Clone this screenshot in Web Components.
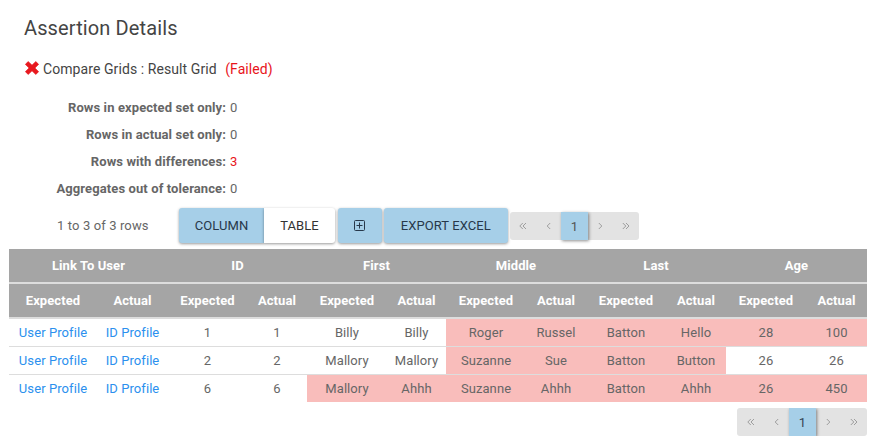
<!DOCTYPE html>
<html lang="en"><head><meta charset="utf-8"><title>Assertion Details</title>
<style>html,body{margin:0;background:#fff}body{height:442px;overflow:hidden;font-family:Roboto,"Liberation Sans",sans-serif;font-size:13px;color:#666;letter-spacing:.08px}</style>
</head><body><assertion-page></assertion-page>
<script>
class Base extends HTMLElement{
  constructor(){super();this.attachShadow({mode:'open'})}
  connectedCallback(){this.shadowRoot.innerHTML=this.view()}
}
customElements.define('assertion-status',class extends Base{view(){return `<style>
:host{display:flex;align-items:center;height:20px;font-size:14px;line-height:20px;color:#444;white-space:pre}
svg{width:14px;height:14px;margin:-3px 4px 0 1px}.f{color:#e8141c;margin-left:8.5px}</style>
<svg viewBox="0 0 14 14"><path d="M3.2 .6 L7 4.2 L10.8 .6 L13.6 3.3 L9.9 7 L13.6 10.7 L10.8 13.4 L7 9.8 L3.2 13.4 L.4 10.7 L4.1 7 L.4 3.3 Z" fill="#e8191f" stroke="#e8191f" stroke-width=".7" stroke-linejoin="round"/></svg><slot></slot><span class="f">(Failed)</span>`}});
customElements.define('stat-line',class extends Base{view(){return `<style>
:host{display:flex;height:27px;line-height:27px;font-size:13px}b{width:226px;text-align:right;font-weight:700;letter-spacing:.1px}span{margin-left:4px;color:#666}:host([bad]) span{color:#e8141c}</style>
<b>${this.getAttribute('label')}:</b><span><slot></slot></span>`}});
customElements.define('tool-button',class extends Base{view(){return `<style>
:host{display:flex;align-items:center;justify-content:center;box-sizing:border-box;height:35px;border-radius:3px;background:#a6cfe8;color:#27384a;font-size:13px;box-shadow:0 1px 3px rgba(0,0,0,.4)}
:host([plain]){background:#fff;color:#333;border-radius:0 3px 3px 0}:host([first]){border-radius:3px 0 0 3px}</style><slot></slot>`}});
customElements.define('page-nav',class extends Base{view(){
const a=d=>`<span><svg width="8" height="8" viewBox="0 0 8 8"><path d="${d}" fill="none" stroke="#999" stroke-width=".95"/></svg></span>`;
return `<style>:host{display:grid;grid-template-columns:var(--nav-first,26px) 25px 27px 25px 1fr;width:var(--nav-width,129px);height:28px;background:#e3e3e3;border-radius:3px;overflow:var(--nav-clip,visible)}
span{display:flex;align-items:center;justify-content:center}
b{font-weight:400;display:flex;align-items:center;justify-content:center;background:#a6cfe8;color:var(--nav-ink,#555);box-shadow:1px 1px 3px rgba(0,0,0,.45);font-size:13px}</style>
${a('M3.8 1 L.8 4 L3.8 7 M7 1 L4 4 L7 7')}${a('M5.2 1 L2.2 4 L5.2 7')}<b>1</b>${a('M1.8 1 L4.8 4 L1.8 7')}${a('M.8 1 L3.8 4 L.8 7 M4 1 L7 4 L4 7')}`}});
customElements.define('compare-grid',class extends Base{view(){
const groups=['Link To User','ID','First','Middle','Last','Age'];
const rows=[['User Profile','ID Profile','1','1','Billy','Billy','Roger','Russel','Batton','Hello','28','100'],
['User Profile','ID Profile','2','2','Mallory','Mallory','Suzanne','Sue','Batton','Button','26','26'],
['User Profile','ID Profile','6','6','Mallory','Ahhh','Suzanne','Ahhh','Batton','Ahhh','26','450']];
const bad=[[6,11],[6,9],[4,11]];
return `<style>:host{display:block;width:858px}
.r{display:grid;grid-template-columns:88px 71px 79px 60px 80px 59px 80px 60px 80px 60px 80px 61px;height:27px;border-bottom:1px solid #ddd;line-height:27px;text-align:center;white-space:nowrap}
.r:last-child{border-bottom:0}.h{height:33px;line-height:33px;border-bottom:2px solid #ddd;background:#a5a5a5;background-clip:padding-box;color:#fff;font-weight:700}
.g>*{grid-column:span 2}.bad{background:#f9bdbb}a{color:#2b90ee}</style>
<div class="r h g">${groups.map(g=>`<div>${g}</div>`).join('')}</div>
<div class="r h">${groups.map(()=>'<div>Expected</div><div>Actual</div>').join('')}</div>
${rows.map((r,i)=>`<div class="r">${r.map((c,j)=>`<div class="${j>=bad[i][0]&&j<=bad[i][1]?'bad':''}">${j<2?`<a>${c}</a>`:c}</div>`).join('')}</div>`).join('')}`}});
customElements.define('assertion-page',class extends Base{view(){return `<style>
:host{display:block;padding-top:14px}h1{margin:0 0 0 24px;font-size:20px;font-weight:400;line-height:28px;color:#444;letter-spacing:.12px}
assertion-status{margin:17px 0 15px 24px}
.bar{display:flex;height:47px;align-items:flex-start;padding-top:6px;box-sizing:border-box}
.n{width:122px;padding-left:57px;line-height:35px;letter-spacing:.12px}.bar page-nav{margin:4px 0 0 2.5px}
compare-grid{margin-left:9px}.foot{display:flex;justify-content:flex-end;padding:6px 9px 0 0;--nav-width:130px;--nav-first:27px;--nav-clip:hidden;--nav-ink:#345}</style>
<h1>Assertion Details</h1>
<assertion-status>Compare Grids : Result Grid</assertion-status>
<stat-line label="Rows in expected set only">0</stat-line><stat-line label="Rows in actual set only">0</stat-line><stat-line bad label="Rows with differences">3</stat-line><stat-line label="Aggregates out of tolerance">0</stat-line>
<div class="bar"><span class="n">1 to 3 of 3 rows</span>
<tool-button first style="width:85px">COLUMN</tool-button><tool-button plain style="width:71px">TABLE</tool-button>
<tool-button style="width:44px;margin-left:3px;padding-right:1px"><svg width="11" height="11" viewBox="0 0 11 11" fill="none" stroke="#27384a"><rect x=".5" y=".5" width="10" height="10" rx="1"/><path d="M5.5 2.5V8.5M2.5 5.5H8.5"/></svg></tool-button>
<tool-button style="width:123.5px;margin-left:2px">EXPORT EXCEL</tool-button><page-nav></page-nav></div>
<compare-grid></compare-grid><div class="foot"><page-nav></page-nav></div>`}});
</script></body></html>
